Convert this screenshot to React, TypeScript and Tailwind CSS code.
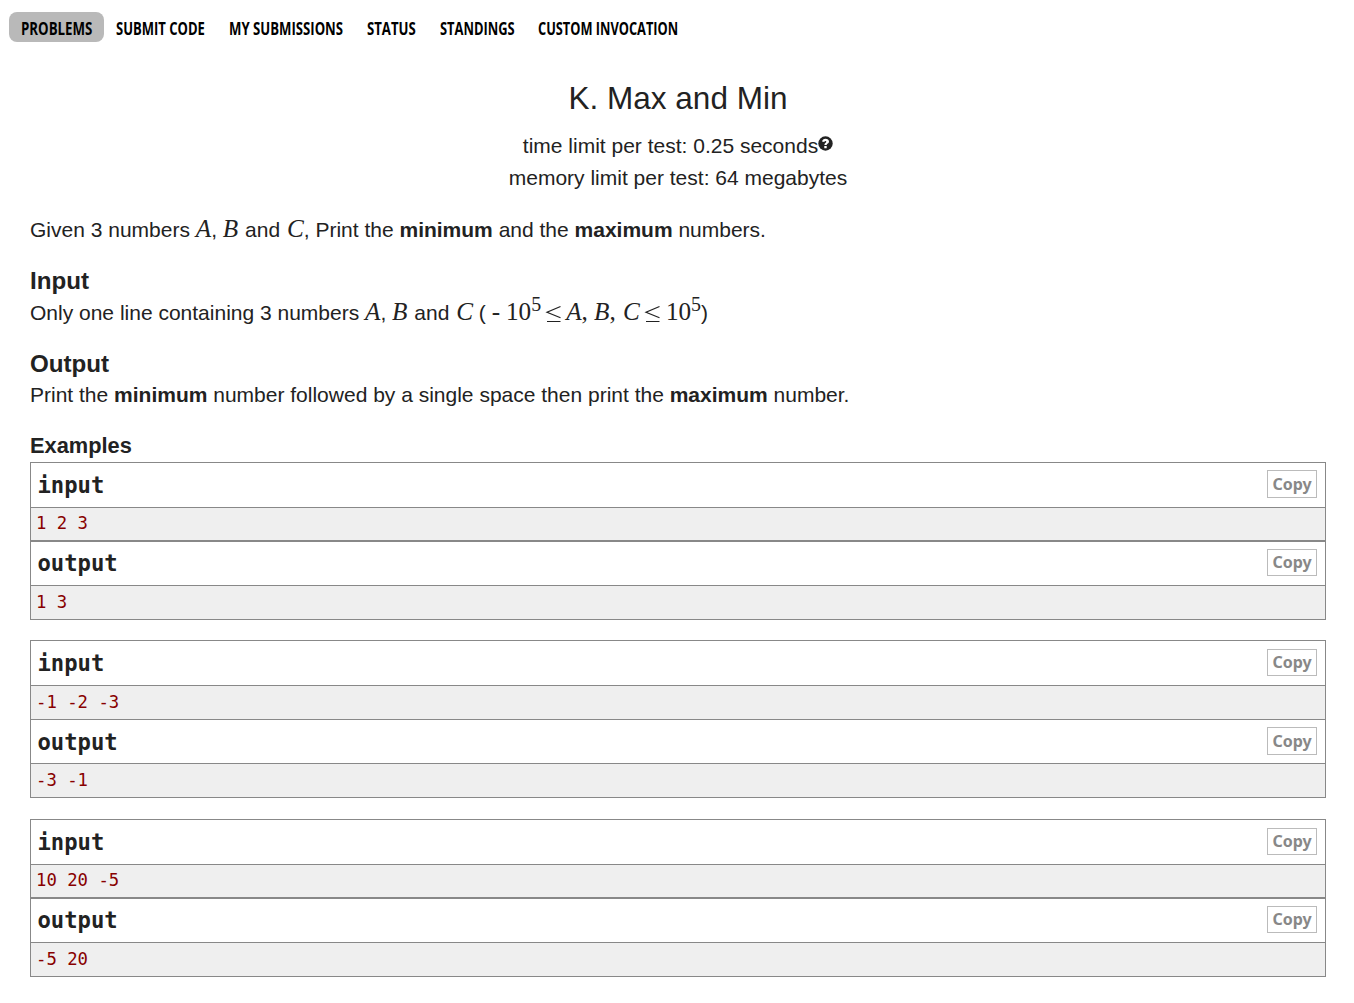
import React from "react";

const NAV = [
  { label: "PROBLEMS", length: 71.5, box: "w-[95px] bg-[#b9b9b9] rounded-[8px]" },
  { label: "SUBMIT CODE", length: 89, box: "w-[113px]" },
  { label: "MY SUBMISSIONS", length: 114, box: "w-[138px]" },
  { label: "STATUS", length: 49, box: "w-[73px]" },
  { label: "STANDINGS", length: 74.5, box: "w-[98px]" },
  { label: "CUSTOM INVOCATION", length: 140, box: "w-[164px]" },
];

const TESTS = [
  { input: "1 2 3", output: "1 3", inCopy: "mt-[7px] h-7", inputPre: "border-b-2 leading-[30px]", outTitle: "leading-[42px]", outCopy: "mt-[7px] h-[27px]", gap: "" },
  { input: "-1 -2 -3", output: "-3 -1", inCopy: "mt-2 h-[27px]", inputPre: "border-b leading-[32px]", outTitle: "leading-[44px]", outCopy: "mt-[7px] h-7", gap: "mt-5" },
  { input: "10 20 -5", output: "-5 20", inCopy: "mt-2 h-[27px]", inputPre: "border-b-2 leading-[30px]", outTitle: "leading-[42px]", outCopy: "mt-[7px] h-[27px]", gap: "mt-[21px]" },
];

function NavItem({ label, length, box }: { label: string; length: number; box: string }) {
  const ref = React.useRef<HTMLSpanElement>(null);
  const [scale, setScale] = React.useState(0.8);
  React.useLayoutEffect(() => {
    if (ref.current) setScale(length / ref.current.offsetWidth);
  }, [length]);
  return (
    <a className={`block h-[30px] pl-3 ${box}`}>
      <span
        ref={ref}
        className="inline-block origin-left whitespace-nowrap font-['Open_Sans'] text-[18px] leading-[33px] font-bold text-black"
        style={{ transform: `scaleX(${scale})` }}
      >
        {label}
      </span>
    </a>
  );
}

function M({ children, className = "" }: { children: React.ReactNode; className?: string }) {
  return (
    <span className={`font-['Liberation_Serif',serif] text-[25.2px] leading-none ${className}`}>{children}</span>
  );
}

function Sup({ children }: { children: React.ReactNode }) {
  return <span className="relative -top-[9px] text-[20px] leading-none">{children}</span>;
}

function Le() {
  return (
    <svg viewBox="0 0 17 18" className="mx-1 -mb-[3px] inline-block h-[18px] w-[17px] align-baseline" aria-label="≤">
      <path d="M15.5 1.5 2 7.3l13.5 5.5M2 16.5h13.5" fill="none" stroke="#222" strokeWidth="1.2" />
    </svg>
  );
}

function TitleRow({ text, box, title, copy }: { text: string; box: string; title: string; copy: string }) {
  return (
    <div className={`flex items-start justify-between border-b border-[#888] bg-white pr-2 pl-[6.5px] ${box}`}>
      <span className={`font-['DejaVu_Sans_Mono',monospace] text-[22.2px] font-bold ${title}`}>{text}</span>
      <button
        className={`flex w-[50px] items-end justify-center border border-[#bbb] font-['Noto_Sans',sans-serif] text-[16px] font-bold text-[#888] ${copy}`}
      >
        <span className="leading-[26px]">Copy</span>
      </button>
    </div>
  );
}

const PRE = "border-[#888] bg-[#efefef] pl-[5px] font-['DejaVu_Sans_Mono',monospace] text-[17.3px] text-[#880000]";

export default function App() {
  return (
    <div className="h-[1003px] w-full overflow-hidden bg-white font-['Liberation_Sans',sans-serif] text-[21px] leading-[32px] text-[#222]">
      <nav className="flex pt-3 pl-[9px]">
        {NAV.map((n) => (
          <NavItem key={n.label} {...n} />
        ))}
      </nav>
      <main className="pr-7 pl-[30px]">
        <header className="pt-8 text-center">
          <h1 className="h-[56px] text-[31.5px] leading-[48px]">K. Max and Min</h1>
          <div className="flex h-8 justify-center">
            <span>time limit per test: 0.25 seconds</span>
            <svg viewBox="0 0 15 15" className="mt-[5.5px] h-[15px] w-[15px]">
              <circle cx="7.5" cy="7.5" r="7.2" fill="#222" />
              <path d="M4 5.6C4.3 3.7 5.6 2.7 7.5 2.7c2 0 3.5 1.1 3.5 2.8 0 2.2-2.3 2-2.3 3.5H6.4c0-2.2 1.9-2.2 1.9-3.3 0-.6-.4-.8-.9-.8-.6 0-.9.4-1.2 1.1ZM6.3 10h2.4v2.3H6.3Z" fill="#fff" />
            </svg>
          </div>
          <div className="h-8">memory limit per test: 64 megabytes</div>
        </header>
        <p className="mt-5 h-8 whitespace-nowrap">
          Given 3 numbers <M className="italic">A</M>, <M className="mr-px italic">B</M> and <M className="ml-px italic">C</M>, Print the <b>minimum</b> and the <b>maximum</b> numbers.
        </p>
        <h2 className="mt-[19px] h-8 text-[24.15px] font-bold">Input</h2>
        <p className="h-8 whitespace-nowrap">
          Only one line containing 3 numbers <M className="italic">A</M>, <M className="mr-px italic">B</M> and <M className="ml-px italic">C</M> ( <M>-</M> <M>10<Sup>5</Sup><Le /><i>A</i>, <i>B</i>, <i className="ml-px">C</i></M><Le /><M className="ml-px">10<Sup>5</Sup></M>)
        </p>
        <h2 className="mt-[19px] h-[31px] text-[24.15px] font-bold">Output</h2>
        <p className="h-8 whitespace-nowrap">
          Print the <b>minimum</b> number followed by a single space then print the <b>maximum</b> number.
        </p>
        <h2 className="mt-[19px] h-[32px] text-[21.8px] font-bold">Examples</h2>
        {TESTS.map((t) => (
          <section key={t.input} className={`border border-[#888] ${t.gap}`}>
            <TitleRow text="input" box="h-[45px]" title="leading-[44px]" copy={t.inCopy} />
            <pre className={`${PRE} h-[34px] ${t.inputPre}`}>{t.input}</pre>
            <TitleRow text="output" box="h-[44px]" title={t.outTitle} copy={t.outCopy} />
            <pre className={`${PRE} h-[33px] leading-[32px]`}>{t.output}</pre>
          </section>
        ))}
      </main>
    </div>
  );
}
